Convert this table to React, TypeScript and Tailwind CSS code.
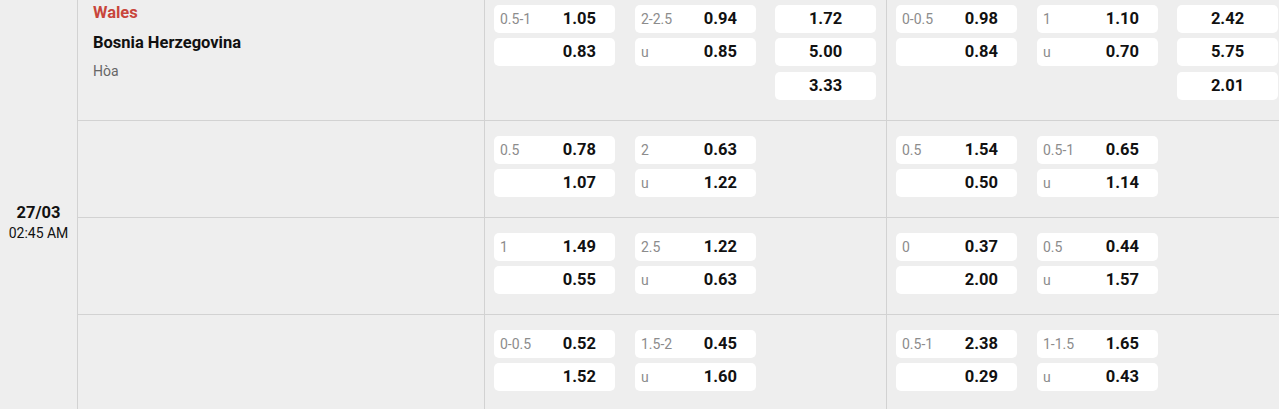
type Odd = { label?: string; value: string };
type Line = { home: Odd; away: Odd };

interface OddsRow {
  hcap1: Line;
  ou1: Line;
  x12_1?: string[];
  hcap2: Line;
  ou2: Line;
  x12_2?: string[];
}

const ROWS: OddsRow[] = [
  {
    hcap1: { home: { label: "0.5-1", value: "1.05" }, away: { value: "0.83" } },
    ou1: { home: { label: "2-2.5", value: "0.94" }, away: { label: "u", value: "0.85" } },
    x12_1: ["1.72", "5.00", "3.33"],
    hcap2: { home: { label: "0-0.5", value: "0.98" }, away: { value: "0.84" } },
    ou2: { home: { label: "1", value: "1.10" }, away: { label: "u", value: "0.70" } },
    x12_2: ["2.42", "5.75", "2.01"],
  },
  {
    hcap1: { home: { label: "0.5", value: "0.78" }, away: { value: "1.07" } },
    ou1: { home: { label: "2", value: "0.63" }, away: { label: "u", value: "1.22" } },
    hcap2: { home: { label: "0.5", value: "1.54" }, away: { value: "0.50" } },
    ou2: { home: { label: "0.5-1", value: "0.65" }, away: { label: "u", value: "1.14" } },
  },
  {
    hcap1: { home: { label: "1", value: "1.49" }, away: { value: "0.55" } },
    ou1: { home: { label: "2.5", value: "1.22" }, away: { label: "u", value: "0.63" } },
    hcap2: { home: { label: "0", value: "0.37" }, away: { value: "2.00" } },
    ou2: { home: { label: "0.5", value: "0.44" }, away: { label: "u", value: "1.57" } },
  },
  {
    hcap1: { home: { label: "0-0.5", value: "0.52" }, away: { value: "1.52" } },
    ou1: { home: { label: "1.5-2", value: "0.45" }, away: { label: "u", value: "1.60" } },
    hcap2: { home: { label: "0.5-1", value: "2.38" }, away: { value: "0.29" } },
    ou2: { home: { label: "1-1.5", value: "1.65" }, away: { label: "u", value: "0.43" } },
  },
];

function OddCell({ odd }: { odd: Odd }) {
  return (
    <div className="flex h-[28px] w-[121px] items-center justify-between rounded-[5px] bg-white pl-[6px] pr-[19px]">
      <span className="text-[14px] text-[#8c8c8c]">{odd.label ?? ""}</span>
      <span className="text-[16.5px] font-bold text-[#111]">{odd.value}</span>
    </div>
  );
}

function LineCol({ line }: { line: Line }) {
  return (
    <div className="flex flex-col gap-[5px]">
      <OddCell odd={line.home} />
      <OddCell odd={line.away} />
    </div>
  );
}

function X12Col({ values }: { values?: string[] }) {
  return (
    <div className="flex w-[101px] flex-none flex-col gap-[5px]">
      {values?.map((v, i) => (
        <div
          key={i}
          className={
            "flex h-[28px] items-center justify-center rounded-[5px] bg-white text-[16.5px] font-bold text-[#111]" +
            (i === 2 ? " mt-[1px]" : "")
          }
        >
          {v}
        </div>
      ))}
    </div>
  );
}

function Group({ hcap, ou, x12, first, border }: { hcap: Line; ou: Line; x12?: string[]; first: boolean; border: boolean }) {
  return (
    <div
      className={
        "flex flex-none items-start pl-[9px] " +
        (first ? "pt-[5px] " : "pt-[15px] ") +
        (border ? "w-[402px] border-r border-[#d2d2d2]" : "flex-1")
      }
    >
      <LineCol line={hcap} />
      <div className="w-[20px] flex-none" />
      <LineCol line={ou} />
      <div className="w-[19px] flex-none" />
      <X12Col values={x12} />
    </div>
  );
}

export default function App() {
  return (
    <div className="flex h-[409px] w-[1279px] overflow-hidden bg-[#eeeeee] font-['Roboto',sans-serif] text-[#111]">
      <div className="flex w-[78px] flex-none flex-col items-center border-r border-[#d2d2d2] pt-[203px]">
        <span className="text-[16.5px] font-bold leading-[20px]">27/03</span>
        <span className="text-[14px] leading-[20px]">02:45 AM</span>
      </div>
      <div className="flex flex-1 flex-col">
        {ROWS.map((row, i) => (
          <div
            key={i}
            className={
              "flex flex-none border-b border-[#d2d2d2] " + (i === 0 ? "h-[121px]" : "h-[97px]")
            }
          >
            <div className="flex w-[407px] flex-none flex-col border-r border-[#d2d2d2] pl-[15px] pt-[3px]">
              {i === 0 && (
                <>
                  <span className="text-[16.5px] font-bold leading-[20px] text-[#c8453b]">Wales</span>
                  <span className="mt-[10px] text-[16.5px] font-bold leading-[20px]">Bosnia Herzegovina</span>
                  <span className="mt-[8px] text-[14px] leading-[20px] text-[#666]">Hòa</span>
                </>
              )}
            </div>
            <Group hcap={row.hcap1} ou={row.ou1} x12={row.x12_1} first={i === 0} border />
            <Group hcap={row.hcap2} ou={row.ou2} x12={row.x12_2} first={i === 0} border={false} />
          </div>
        ))}
      </div>
    </div>
  );
}
